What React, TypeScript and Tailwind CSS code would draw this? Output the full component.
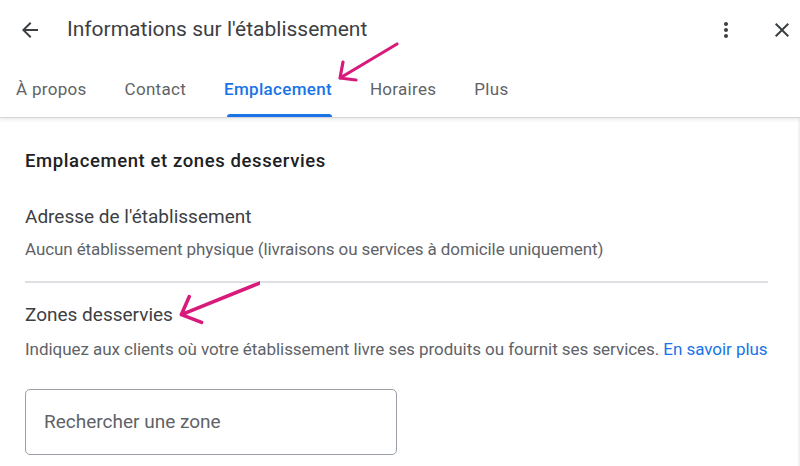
import React from 'react';

const tabs = ['À propos', 'Contact', 'Emplacement', 'Horaires', 'Plus'];

const PinkArrow = ({ className, d }: { className: string; d: string }) => (
  <svg className={className} viewBox="0 0 80 50" fill="none" stroke="#d81b7a" strokeWidth="3.2" strokeLinecap="round" strokeLinejoin="round">
    <path d={d} />
  </svg>
);

export default function App() {
  return (
    <div className="relative w-[800px] h-[466px] overflow-hidden bg-white text-[#3c4043] flex flex-col" style={{ fontFamily: 'Roboto, "Noto Sans", sans-serif' }}>
      {/* Header */}
      <div className="relative z-10 border-b border-[#d5d5d5] shadow-[0_2px_4px_rgba(0,0,0,0.08)]">
        <div className="flex items-center h-[58px] pt-[1px] pl-[18px] pr-[6px]">
          <svg width="24" height="24" viewBox="0 0 24 24" className="text-[#3c4043]">
            <path d="M20 11H7.83l5.59-5.59L12 4l-8 8 8 8 1.41-1.41L7.83 13H20v-2z" fill="currentColor" />
          </svg>
          <h1 className="ml-[25px] text-[21px] font-normal text-[#3c4043]">Informations sur l'établissement</h1>
          <div className="flex-1" />
          <svg width="24" height="24" viewBox="0 0 24 24" className="text-[#3c4043]">
            <path d="M12 8c1.1 0 2-.9 2-2s-.9-2-2-2-2 .9-2 2 .9 2 2 2zm0 2c-1.1 0-2 .9-2 2s.9 2 2 2 2-.9 2-2-.9-2-2-2zm0 6c-1.1 0-2 .9-2 2s.9 2 2 2 2-.9 2-2-.9-2-2-2z" fill="currentColor" />
          </svg>
          <svg width="24" height="24" viewBox="0 0 24 24" className="ml-[32px] text-[#3c4043]">
            <path d="M19 6.41 17.59 5 12 10.59 6.41 5 5 6.41 10.59 12 5 17.59 6.41 19 12 13.41 17.59 19 19 17.59 13.41 12z" fill="currentColor" />
          </svg>
        </div>
        <div className="flex h-[59px] pl-[16px]">
          {tabs.map((t) => {
            const active = t === 'Emplacement';
            return (
              <div key={t} className="relative flex items-center pt-[4px] mr-[38px]">
                <span className={`text-[17px] tracking-[0.3px] ${active ? 'font-medium text-[#1a73e8]' : 'text-[#5f6368]'}`}>{t}</span>
                {active && <span className="absolute bottom-0 left-[3px] right-0 h-[3px] rounded-t-[3px] bg-[#1a73e8]" />}
              </div>
            );
          })}
        </div>
      </div>

      {/* Body */}
      <div className="flex-1 pl-[25px] pr-[30px] border-r-2 border-[#f2f2f2]">
        <h2 className="mt-[32px] text-[18.5px] font-medium tracking-[0.6px] text-[#202124] leading-[22px]">Emplacement et zones desservies</h2>
        <div className="mt-[33px] text-[19px] leading-[24px] text-[#3c4043]">Adresse de l'établissement</div>
        <div className="mt-[10px] text-[17px] tracking-[-0.1px] leading-[20px] text-[#5f6368]">Aucun établissement physique (livraisons ou services à domicile uniquement)</div>
        <div className="mt-[22px] h-[2px] bg-[#dfe0e4]" />
        <div className="mt-[20px] text-[19px] leading-[24px] text-[#3c4043]">Zones desservies</div>
        <div className="mt-[12px] text-[17px] leading-[20px] text-[#5f6368] tracking-[-0.05px] whitespace-nowrap">
          Indiquez aux clients où votre établissement livre ses produits ou fournit ses services.{' '}
          <span className="text-[#1a73e8]">En savoir plus</span>
        </div>
        <div className="mt-[30px] w-[372px] h-[66px] flex items-center pl-[18px] border border-[#9aa0a6] rounded-[5px]">
          <span className="text-[19px] text-[#5f6368]">Rechercher une zone</span>
        </div>
      </div>

      {/* Annotation arrows */}
      <PinkArrow className="absolute left-[330px] top-[38px] w-[80px] h-[50px] z-20" d="M67 6 L10 40 M13 24 L10 40 L26 42" />
      <PinkArrow className="absolute left-[170px] top-[272px] w-[90px] h-[56px] z-20" d="M82 9 L10 38 M17 22 L10 38 L28 45" />
    </div>
  );
}
